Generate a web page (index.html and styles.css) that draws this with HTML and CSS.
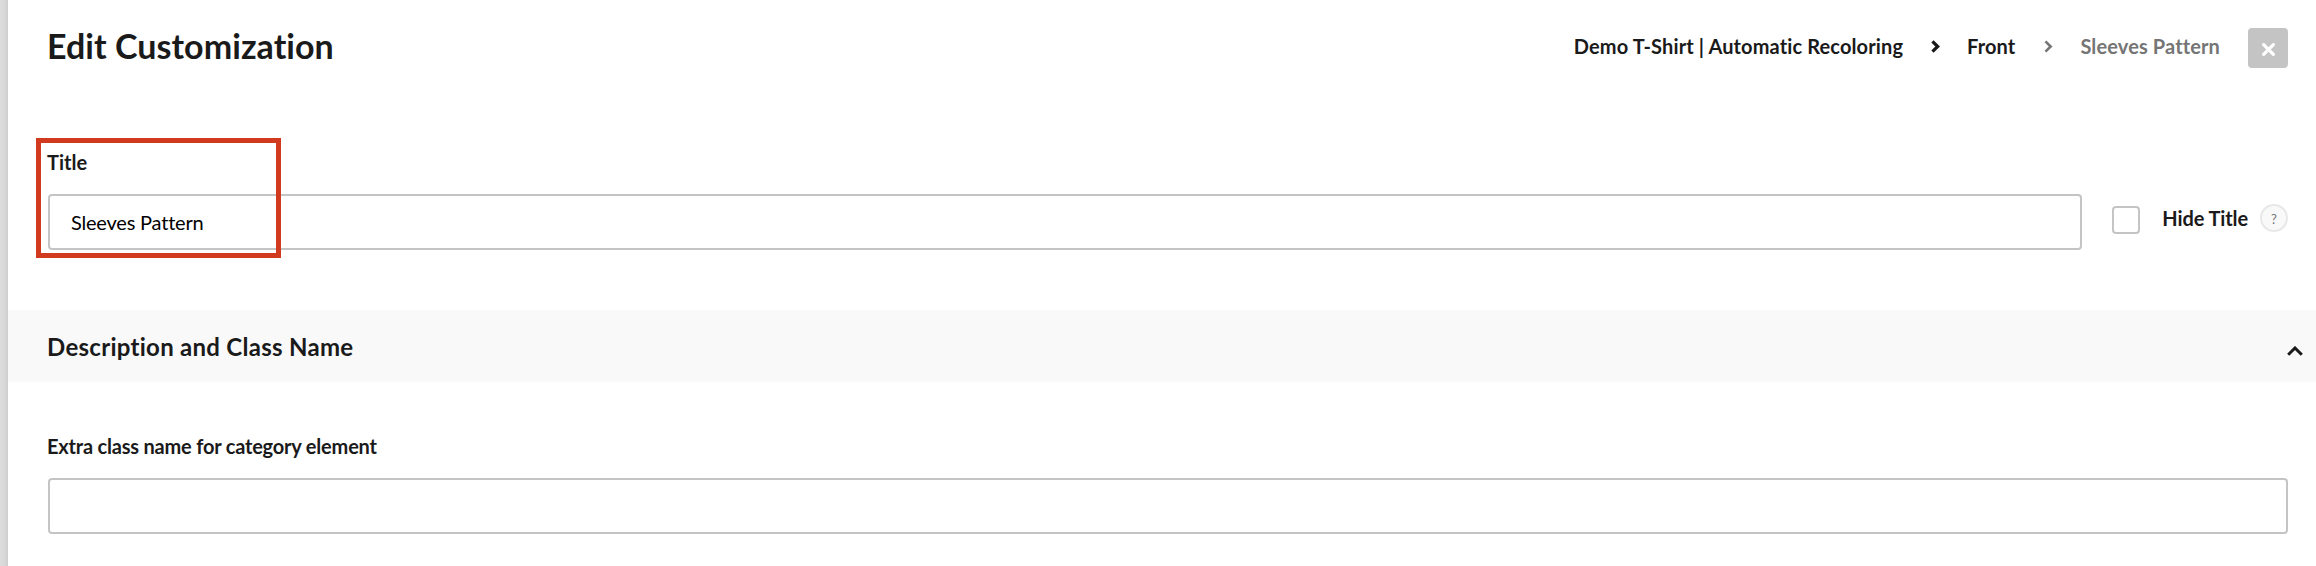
FILE: index.html
```html
<!DOCTYPE html>
<html lang="en">
<head>
    <meta charset="UTF-8">
    <meta name="viewport" content="width=device-width, initial-scale=1.0">
    <title>Edit Customization</title>
    <link rel="stylesheet" href="styles.css">
</head>
<body>

    <div class="panel">
        <header class="header">
            <h1>Edit Customization</h1>
            <nav class="breadcrumb">
                <a class="crumb">Demo T-Shirt | Automatic Recoloring</a>
                <svg class="arrow" viewBox="0 0 8 12"><path d="M1.2 1.2 L6 6 L1.2 10.8"/></svg>
                <a class="crumb">Front</a>
                <svg class="arrow arrow-muted" viewBox="0 0 8 12"><path d="M1.2 1.2 L6 6 L1.2 10.8"/></svg>
                <span class="crumb crumb-current">Sleeves Pattern</span>
            </nav>
            <button class="close-btn" type="button" aria-label="Close">
                <svg viewBox="0 0 12 12"><path d="M1.5 1.5 L10.5 10.5 M10.5 1.5 L1.5 10.5"/></svg>
            </button>
        </header>

        <div class="title-section">
            <label class="label" for="title">Title</label>
            <div class="title-row">
                <input class="input" id="title" type="text" value="Sleeves Pattern">
                <div class="hide-title">
                    <input class="checkbox" id="hide-title" type="checkbox">
                    <label class="label hide-label" for="hide-title">Hide Title</label>
                    <span class="help">?</span>
                </div>
            </div>
            <div class="highlight"></div>
        </div>

        <div class="section-header">
            <h2>Description and Class Name</h2>
            <svg class="collapse" viewBox="0 0 16 10"><path d="M1.2 8.8 L8 2 L14.8 8.8"/></svg>
        </div>

        <div class="section-body">
            <label class="label class-label" for="class-name">Extra class name for category element</label>
            <input class="input" id="class-name" type="text">
        </div>
    </div>

</body>
</html>
```
FILE: styles.css
```css
:root {
    --text-main: #1a1a1a;
    --text-muted: #757575;
    --border-color: #c4c4c4;
    --highlight: #d23a20;
}

* {
    box-sizing: border-box;
}

body {
    font-family: Lato, "Liberation Sans", sans-serif;
    font-variant-ligatures: none;
    color: var(--text-main);
    background: linear-gradient(to right, #dcdcdc 0, #d9d9d9 4px, #cecece 8px);
    margin: 0;
    padding-left: 8px;
    height: 100vh;
    overflow: hidden;
}

.panel {
    height: 100%;
    background-color: #fff;
}

.header {
    display: flex;
    align-items: center;
    height: 96px;
    padding: 0 28px 0 39px;
}

.header h1 {
    margin: 0 auto 5px 0;
    font-size: 34px;
    line-height: 40px;
    font-weight: bold;
    letter-spacing: 0.05px;
}

.breadcrumb {
    display: flex;
    align-items: center;
    margin-bottom: 4px;
}

.crumb {
    font-size: 20px;
    line-height: 24px;
    font-weight: bold;
    letter-spacing: 0.12px;
    white-space: nowrap;
}

.crumb-current {
    color: var(--text-muted);
}

.arrow {
    width: 9px;
    height: 13px;
    margin: 0 27px 0 28px;
    fill: none;
    stroke: var(--text-main);
    stroke-width: 3;
}

.arrow-muted {
    margin-left: 29px;
    stroke: var(--text-muted);
    stroke-width: 2.4;
}

.close-btn {
    display: flex;
    align-items: center;
    justify-content: center;
    width: 40px;
    height: 40px;
    margin-left: 28px;
    padding: 2px 0 0;
    border: none;
    border-radius: 4px;
    background-color: #c4c4c4;
}

.close-btn svg {
    width: 13px;
    height: 13px;
    fill: none;
    stroke: #fff;
    stroke-width: 3;
    stroke-linecap: round;
}

.title-section {
    position: relative;
    height: 214px;
    padding: 54px 28px 0 40px;
}

.label {
    display: block;
    margin-left: -1px;
    font-size: 20px;
    line-height: 24px;
    font-weight: bold;
}

.title-row {
    display: flex;
    margin-top: 20px;
}

.input {
    display: block;
    width: 100%;
    height: 56px;
    padding: 0 21px;
    border: 2px solid var(--border-color);
    border-radius: 4px;
    background-color: #fff;
    color: #000;
    font-family: inherit;
    font-size: 20px;
    letter-spacing: -0.2px;
}

.hide-title {
    display: flex;
    align-items: center;
    flex-shrink: 0;
    height: 50px;
    margin-left: 30px;
}

.checkbox {
    appearance: none;
    width: 28px;
    height: 28px;
    margin: 2px 0 0;
    border: 2px solid var(--border-color);
    border-radius: 4px;
    background-color: #fff;
}

.hide-label {
    margin: -2px 0 0 22px;
    letter-spacing: -0.1px;
}

.help {
    width: 28px;
    height: 28px;
    margin: -2px 0 0 12px;
    border: 2px solid #e8e8e8;
    border-radius: 50%;
    background-color: #f9f9f9;
    color: #757575;
    font-size: 13px;
    line-height: 27px;
    text-align: center;
}

/* red frame over the title field */
.highlight {
    position: absolute;
    top: 42px;
    left: 28px;
    width: 245px;
    height: 120px;
    border: 5px solid var(--highlight);
    pointer-events: none;
}

.section-header {
    display: flex;
    align-items: center;
    justify-content: space-between;
    height: 72px;
    padding: 0 13px 0 39px;
    background-color: #f9f9f9;
}

.section-header h2 {
    margin: 2px 0 0;
    font-size: 24px;
    line-height: 28px;
    font-weight: bold;
    letter-spacing: 0.28px;
}

.collapse {
    width: 16px;
    height: 10px;
    margin-top: 10px;
    fill: none;
    stroke: var(--text-main);
    stroke-width: 3;
}

.section-body {
    padding: 52px 28px 0 40px;
}

.class-label {
    letter-spacing: -0.2px;
}

.section-body .input {
    margin-top: 20px;
}
```
